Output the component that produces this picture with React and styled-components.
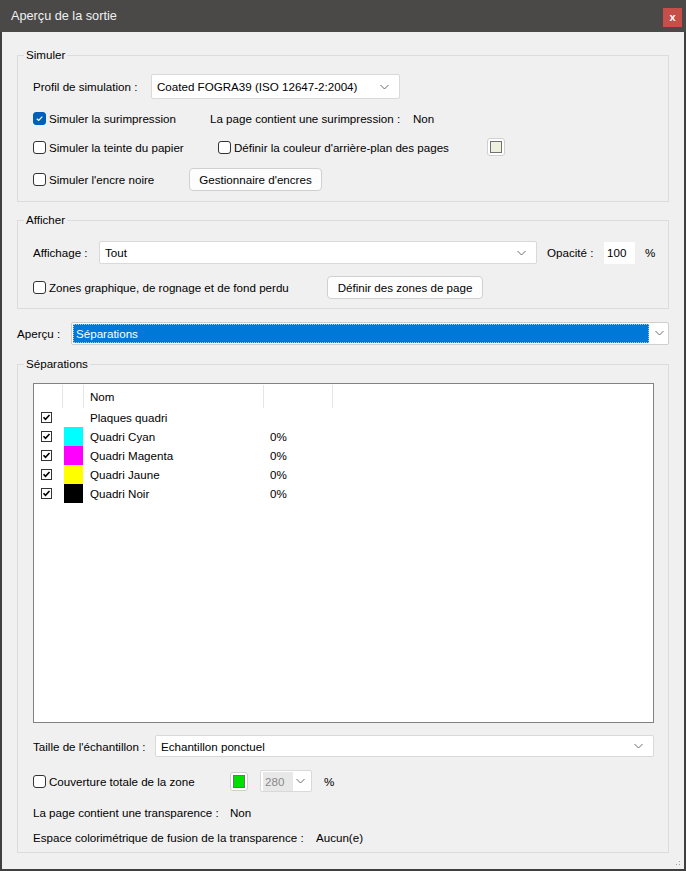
import React from "react";
import styled, { createGlobalStyle } from "styled-components";

const Global = createGlobalStyle`
  html, body { margin: 0; padding: 0; background: #3d3d3d; }
  body { font-family: "Liberation Sans", Arial, sans-serif; font-size: 11.6px; color: #000; }
  * { box-sizing: border-box; }
`;

const Window = styled.div`
  width: 686px;
  height: 871px;
  border: 2px solid #3f3f3f;
  border-top: none;
  background: #f0f0f0;
  display: flex;
  flex-direction: column;
  position: relative;
`;

const TitleBar = styled.div`
  height: 32px;
  margin: 0 -2px;
  background: #4a4948;
  display: flex;
  align-items: center;
  justify-content: space-between;
  padding: 0 4px 0 11px;
  color: #f0f0f0;
  font-size: 12.7px;
`;

const CloseButton = styled.div`
  width: 19px;
  height: 19px;
  background: #c64f4a;
  color: #fff;
  font-size: 11px;
  font-weight: bold;
  display: flex;
  align-items: center;
  justify-content: center;
  margin-top: 2px;
`;

const Body = styled.div`
  flex: 1;
  padding: 15px 15px 0 15px;
  display: flex;
  flex-direction: column;
`;

const Group = styled.fieldset`
  margin: ${p => p.$mt || 0}px 0 ${p => p.$mb || 0}px 0;
  border: 1px solid #dcdcdc;
  padding: ${p => p.$pt || 11}px 14px ${p => p.$pb || 10}px 15px;
  min-width: 0;
`;

const Legend = styled.legend`
  padding: 0 2px;
  margin-left: -9px;
  line-height: 16px;
`;

const Column = styled.div`
  display: flex;
  flex-direction: column;
`;

const Row = styled.div`
  display: flex;
  align-items: center;
  height: ${p => p.$h || 20}px;
  margin-top: ${p => p.$mt || 0}px;
`;

const Cell = styled.div`
  display: flex;
  align-items: center;
  flex: none;
  width: ${p => (p.$w ? p.$w + "px" : "auto")};
  margin-left: ${p => p.$ml || 0}px;
  white-space: nowrap;
`;

const Label = styled.span`
  white-space: nowrap;
`;

const CheckBox = styled.span`
  width: 13px;
  height: 13px;
  border-radius: 3px;
  border: 1px solid ${p => (p.$on ? "#005fb8" : "#333")};
  background: ${p => (p.$on ? "#005fb8" : "#fff")};
  display: inline-flex;
  align-items: center;
  justify-content: center;
  margin-right: 3px;
  flex: none;
`;

const Check = ({ on, children }) => (
  <Cell>
    <CheckBox $on={on}>
      {on && (
        <svg width="9" height="9" viewBox="0 0 9 9">
          <path d="M1.8 4.7 L3.7 6.5 L7.3 2.6" fill="none" stroke="#fff" strokeWidth="1.2" />
        </svg>
      )}
    </CheckBox>
    <Label>{children}</Label>
  </Cell>
);

const SelectBox = styled.div`
  width: ${p => (p.$w ? p.$w + "px" : "auto")};
  flex: ${p => (p.$w ? "none" : 1)};
  height: ${p => p.$h || 23}px;
  background: #fff;
  border: 1px solid #d9d9d9;
  border-radius: 2px;
  display: flex;
  align-items: center;
  padding: 0 ${p => (p.$pr != null ? p.$pr : 10)}px 0 ${p => (p.$pl != null ? p.$pl : 5)}px;
  color: ${p => (p.$disabled ? "#8a8a8a" : "#000")};
`;

const SelectText = styled.span`
  flex: 1;
  white-space: nowrap;
`;

const Chevron = () => (
  <svg width="9" height="6" viewBox="0 0 9 6">
    <path d="M0.5 1 L4.5 5 L8.5 1" fill="none" stroke="#6b6b6b" strokeWidth="1" />
  </svg>
);

const Select = ({ w, h, children }) => (
  <SelectBox $w={w} $h={h}>
    <SelectText>{children}</SelectText>
    <Chevron />
  </SelectBox>
);

const FocusSelect = styled(SelectBox)`
  padding: 1px 4px 1px 1px;
  border-color: #cfcfcf;
`;

const Highlight = styled.span`
  flex: 1;
  align-self: stretch;
  background: #0078d7;
  color: #fff;
  outline: 1px dotted #9fc8ee;
  outline-offset: -1px;
  display: flex;
  align-items: center;
  padding-left: 3px;
  margin-right: 6px;
`;

const DimValue = styled.span`
  background: #e8e8e8;
  padding: 3px 9px 3px 2px;
`;

const Button = styled.div`
  width: ${p => p.$w}px;
  height: 23px;
  background: #fdfdfd;
  border: 1px solid #d0d0d0;
  border-radius: 4px;
  display: flex;
  align-items: center;
  justify-content: center;
  white-space: nowrap;
  flex: none;
`;

const Swatch = styled.div`
  width: ${p => p.$w || 18}px;
  height: ${p => p.$h || 18}px;
  border: 1px solid #cfcfcf;
  border-radius: 3px;
  background: #fff;
  padding: 2px;
  flex: none;
  & > div {
    width: 100%;
    height: 100%;
    background: ${p => p.$color};
    border: 1px solid #707070;
  }
`;

const NumberInput = styled.div`
  width: 31px;
  height: 22px;
  background: #fff;
  display: flex;
  align-items: center;
  padding-left: 3px;
  flex: none;
`;

const ListBox = styled.div`
  height: 340px;
  background: #fff;
  border: 1px solid #828282;
  display: flex;
  flex-direction: column;
  padding-top: 1px;
`;

const Grid = styled.div`
  display: grid;
  grid-template-columns: 29px 21px 180px 69px 1fr;
  height: ${p => p.$h || 19}px;
  align-items: center;
`;

const HeadCell = styled.div`
  height: 100%;
  border-right: ${p => (p.$last ? "none" : "1px solid #e5e5e5")};
  display: flex;
  align-items: center;
  padding-left: 6px;
`;

const ListCell = styled.div`
  height: 100%;
  display: flex;
  align-items: center;
  padding-left: ${p => p.$pl || 0}px;
`;

const ClassicBox = styled.span`
  width: 11px;
  height: 11px;
  border: 1px solid #333;
  background: #fff;
  display: inline-flex;
  align-items: center;
  justify-content: center;
  margin-left: 7px;
`;

const ColorChip = styled.div`
  width: 19px;
  height: 19px;
  background: ${p => p.$color};
  margin-left: 1px;
`;

const Grip = styled.div`
  position: absolute;
  right: 2px;
  bottom: 2px;
  width: 10px;
  height: 10px;
  background-image: radial-gradient(circle, #a0a0a0 0.8px, transparent 1px);
  background-size: 3px 3px;
  clip-path: polygon(100% 0, 100% 100%, 0 100%);
`;

const plates = [
  { name: "Plaques quadri", color: null, pct: "" },
  { name: "Quadri Cyan", color: "#00ffff", pct: "0%" },
  { name: "Quadri Magenta", color: "#ff00ff", pct: "0%" },
  { name: "Quadri Jaune", color: "#ffff00", pct: "0%" },
  { name: "Quadri Noir", color: "#000000", pct: "0%" },
];

export default function App() {
  return (
    <>
      <Global />
      <Window>
        <TitleBar>
          <span>Aperçu de la sortie</span>
          <CloseButton>x</CloseButton>
        </TitleBar>
        <Body>
          <Group $mb={10}>
            <Legend>Simuler</Legend>
            <Column>
              <Row $h={25}>
                <Cell $w={118}>Profil de simulation :</Cell>
                <Select w={249} h={25}>Coated FOGRA39 (ISO 12647-2:2004)</Select>
              </Row>
              <Row $mt={9}>
                <Cell $w={177}><Check on>Simuler la surimpression</Check></Cell>
                <Cell $w={203}>La page contient une surimpression :</Cell>
                <Cell>Non</Cell>
              </Row>
              <Row $mt={9}>
                <Cell $w={185}><Check>Simuler la teinte du papier</Check></Cell>
                <Cell $w={269}><Check>Définir la couleur d'arrière-plan des pages</Check></Cell>
                <Swatch $color="#ecf0dc"><div /></Swatch>
              </Row>
              <Row $mt={11} $h={23}>
                <Cell $w={156}><Check>Simuler l'encre noire</Check></Cell>
                <Button $w={133}>Gestionnaire d'encres</Button>
              </Row>
            </Column>
          </Group>

          <Group $pt={13} $pb={9}>
            <Legend>Afficher</Legend>
            <Column>
              <Row $h={23}>
                <Cell $w={66}>Affichage :</Cell>
                <Select w={438}>Tout</Select>
                <Cell $w={57} $ml={10}>Opacité :</Cell>
                <NumberInput>100</NumberInput>
                <Cell $ml={10}>%</Cell>
              </Row>
              <Row $h={23} $mt={12}>
                <Cell $w={294}><Check>Zones graphique, de rognage et de fond perdu</Check></Cell>
                <Button $w={156}>Définir des zones de page</Button>
              </Row>
            </Column>
          </Group>

          <Row $h={24} $mt={12}>
            <Cell $w={54}>Aperçu :</Cell>
            <FocusSelect>
              <Highlight>Séparations</Highlight>
              <Chevron />
            </FocusSelect>
          </Row>

          <Group $mt={11} $pb={5}>
            <Legend>Séparations</Legend>
            <Column>
              <ListBox>
                <Grid $h={23}>
                  <HeadCell />
                  <HeadCell />
                  <HeadCell>Nom</HeadCell>
                  <HeadCell />
                  <HeadCell $last />
                </Grid>
                {plates.map(p => (
                  <Grid key={p.name}>
                    <ListCell>
                      <ClassicBox>
                        <svg width="9" height="9" viewBox="0 0 9 9">
                          <path d="M1.5 4.2 L3.5 6.3 L7.5 2" fill="none" stroke="#000" strokeWidth="1.6" />
                        </svg>
                      </ClassicBox>
                    </ListCell>
                    <ListCell>{p.color && <ColorChip $color={p.color} />}</ListCell>
                    <ListCell $pl={6}>{p.name}</ListCell>
                    <ListCell $pl={6}>{p.pct}</ListCell>
                    <ListCell />
                  </Grid>
                ))}
              </ListBox>
              <Row $h={22} $mt={12}>
                <Cell $w={122}>Taille de l'échantillon :</Cell>
                <Select h={22}>Echantillon ponctuel</Select>
              </Row>
              <Row $h={22} $mt={13}>
                <Cell $w={197}><Check>Couverture totale de la zone</Check></Cell>
                <Swatch $w={18} $h={19} $color="#00e000"><div /></Swatch>
                <Cell $ml={12}>
                  <SelectBox $w={52} $h={22} $disabled $pl={2} $pr={6}>
                    <SelectText><DimValue>280</DimValue></SelectText>
                    <Chevron />
                  </SelectBox>
                </Cell>
                <Cell $ml={12}>%</Cell>
              </Row>
              <Row $mt={10}>
                <Cell $w={197}>La page contient une transparence :</Cell>
                <Cell>Non</Cell>
              </Row>
              <Row $mt={5}>
                <Cell $w={283}>Espace colorimétrique de fusion de la transparence :</Cell>
                <Cell>Aucun(e)</Cell>
              </Row>
            </Column>
          </Group>
        </Body>
        <Grip />
      </Window>
    </>
  );
}
